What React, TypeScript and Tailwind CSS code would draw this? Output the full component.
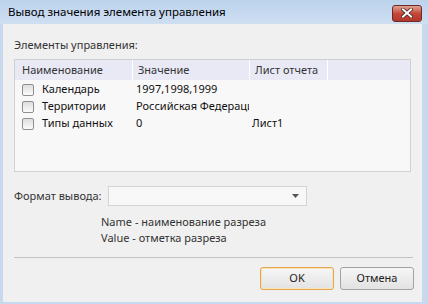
import React from "react";

const rows = [
  { name: "Календарь", value: "1997,1998,1999", sheet: "" },
  { name: "Территории", value: "Российская Федерация", sheet: "" },
  { name: "Типы данных", value: "0", sheet: "Лист1" },
];

const Checkbox: React.FC = () => (
  <div className="w-[12px] h-[12px] shrink-0 rounded-[2px] border border-[#8f8f8f] bg-gradient-to-b from-[#dedede] to-[#fbfbfb]" />
);

const App: React.FC = () => {
  return (
    <div
      className="w-[428px] h-[304px] flex flex-col bg-[#c6d9ef] overflow-hidden text-[11px] text-[#1e1e1e]"
      style={{ fontFamily: '"Noto Sans", "Open Sans", sans-serif' }}
    >
      {/* title bar */}
      <div className="h-[24px] flex items-center justify-between pl-[8px] pr-[6px] bg-gradient-to-b from-[#bcd2ec] to-[#cfdff2]">
        <span className="text-[11.5px] text-black leading-none">
          Вывод значения элемента управления
        </span>
        <div className="w-[30px] h-[17px] mt-[2px] rounded-[3px] border border-[#6b2a22] bg-gradient-to-b from-[#e0a092] via-[#c5483a] to-[#b3372a] flex items-center justify-center">
          <svg width="12" height="10" viewBox="0 0 12 10">
            <path
              d="M2 1.5 L10 8.5 M10 1.5 L2 8.5"
              stroke="#4a2420"
              strokeWidth="3.6"
              strokeLinecap="square"
            />
            <path
              d="M2 1.5 L10 8.5 M10 1.5 L2 8.5"
              stroke="#ffffff"
              strokeWidth="2"
              strokeLinecap="square"
            />
          </svg>
        </div>
      </div>

      {/* client area */}
      <div className="flex-1 ml-[3px] mr-[6px] mb-[2px] bg-[#f0f0f0] flex flex-col pl-[11px] pr-[8px]">
        <div className="mt-[13px] h-[16px] leading-[16px] text-[#333]">
          Элементы управления:
        </div>

        <div className="mt-[6px] w-[397px] h-[113px] border border-[#cfcfd6] bg-[#f8f8f8] flex flex-col">
          <div className="h-[20px] flex bg-[#e9e9f6] text-[#333]">
            <div className="w-[118px] pl-[7px] leading-[20px] border-r border-white">
              Наименование
            </div>
            <div className="w-[117px] pl-[5px] leading-[20px] border-r border-white">
              Значение
            </div>
            <div className="w-[78px] pl-[5px] leading-[20px] border-r border-white">
              Лист отчета
            </div>
            <div className="flex-1" />
          </div>
          <div className="pt-[1px]">
            {rows.map((r) => (
              <div key={r.name} className="h-[17px] flex items-center text-[#111]">
                <div className="w-[118px] flex items-center pl-[7px] gap-[8px]">
                  <Checkbox />
                  <span className="whitespace-nowrap">{r.name}</span>
                </div>
                <div className="w-[116px] pl-[3px] whitespace-nowrap overflow-hidden">
                  {r.value}
                </div>
                <div className="w-[78px] pl-[3px]">{r.sheet}</div>
              </div>
            ))}
          </div>
        </div>

        <div className="mt-[14px] flex items-center">
          <div className="w-[94px] whitespace-nowrap text-[#333]">Формат вывода:</div>
          <div className="w-[199px] h-[20px] border border-[#d3d3d3] bg-[#f8f8f8] flex items-center justify-end pr-[7px]">
            <svg width="7" height="4" viewBox="0 0 7 4">
              <path d="M0 0 L7 0 L3.5 4 Z" fill="#555" />
            </svg>
          </div>
        </div>

        <div className="mt-[8px] pl-[87px] text-[#333] leading-[16px]">
          <div>Name - наименование разреза</div>
          <div>Value - отметка разреза</div>
        </div>

        <div className="mt-[11px] h-px bg-[#c3c3c3] mr-[1px]" />

        <div className="mt-[9px] flex justify-end gap-[6px]">
          <button className="w-[74px] h-[23px] rounded-[3px] border border-[#e3a54f] bg-gradient-to-b from-[#f6f6f6] to-[#e3e3e3] text-[#222] shadow-[inset_0_0_0_1px_#fbe3b8]">
            OK
          </button>
          <button className="w-[74px] h-[23px] rounded-[3px] border border-[#a3a3a3] bg-gradient-to-b from-[#f6f6f6] to-[#e2e2e2] text-[#222]">
            Отмена
          </button>
        </div>
      </div>
    </div>
  );
};

export default App;
